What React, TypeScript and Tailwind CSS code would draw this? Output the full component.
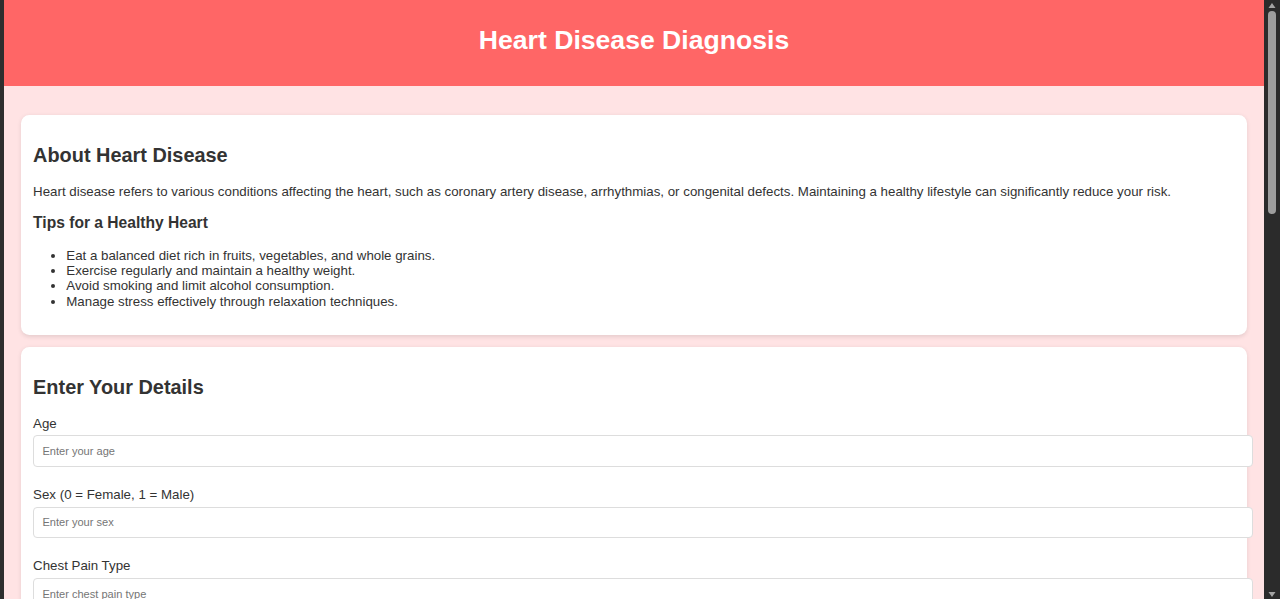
import React from "react";

const tips = [
  "Eat a balanced diet rich in fruits, vegetables, and whole grains.",
  "Exercise regularly and maintain a healthy weight.",
  "Avoid smoking and limit alcohol consumption.",
  "Manage stress effectively through relaxation techniques.",
];

const fields = [
  { label: "Age", placeholder: "Enter your age" },
  { label: "Sex (0 = Female, 1 = Male)", placeholder: "Enter your sex" },
  { label: "Chest Pain Type", placeholder: "Enter chest pain type" },
  { label: "Resting Blood Pressure", placeholder: "Enter resting blood pressure" },
  { label: "Cholesterol", placeholder: "Enter cholesterol level" },
];

function Scrollbar() {
  return (
    <div className="w-[16px] shrink-0 bg-[#2b2b2b] flex flex-col items-center">
      <svg width="8" height="10" viewBox="0 0 8 10" className="mt-[1px]">
        <path d="M4 2 L7.5 7 L0.5 7 Z" fill="#a3a3a3" />
      </svg>
      <div className="w-[8px] h-[203px] rounded-[4px] bg-[#9e9e9e]" />
      <div className="flex-1" />
      <svg width="8" height="8" viewBox="0 0 8 8" className="mb-[1px]">
        <path d="M0.5 2 L7.5 2 L4 7 Z" fill="#a3a3a3" />
      </svg>
    </div>
  );
}

export default function App() {
  return (
    <div className="h-[599px] w-[1280px] overflow-hidden flex bg-[#2b2b2b] font-['Liberation_Sans',Arial,sans-serif] text-[#333]">
      <div className="w-[4px] shrink-0 bg-[#2e2e2e]" />

      <div className="flex-1 min-w-0 bg-[#ffe3e4] overflow-hidden">
        <header className="h-[86px] pb-[7px] bg-[#ff6666] flex items-center justify-center">
          <h1 className="text-[26.6px] leading-[30px] font-bold text-white">Heart Disease Diagnosis</h1>
        </header>

        <main className="px-[16.6px] pt-[16.6px]">
          <section className="bg-white rounded-[8.3px] shadow-[0_1.6px_4px_rgba(0,0,0,0.1)] p-[12.5px] mt-[12.5px]">
            <h2 className="mt-[16.5px] mb-[16.5px] text-[19.9px] leading-[22.9px] font-bold">About Heart Disease</h2>
            <p className="text-[13.3px] leading-[15.3px]">
              Heart disease refers to various conditions affecting the heart, such as coronary artery disease,
              arrhythmias, or congenital defects. Maintaining a healthy lifestyle can significantly reduce your risk.
            </p>
            <h3 className="mt-[15.6px] mb-[15.6px] text-[15.6px] leading-[17.9px] font-bold">Tips for a Healthy Heart</h3>
            <ul className="list-disc pl-[33.2px] mb-[13.3px] text-[13.3px] leading-[15.3px]">
              {tips.map((tip) => (
                <li key={tip}>{tip}</li>
              ))}
            </ul>
          </section>

          <section className="bg-white rounded-[8.3px] shadow-[0_1.6px_4px_rgba(0,0,0,0.1)] p-[12.5px] mt-[12.5px]">
            <h2 className="mt-[16.5px] mb-[16.5px] text-[19.9px] leading-[22.9px] font-bold">Enter Your Details</h2>
            <form>
              {fields.map((f) => (
                <div key={f.label} className="mb-[20.4px]">
                  <label className="block mb-[4.3px] text-[13.3px] leading-[15.3px]">{f.label}</label>
                  <input
                    type="text"
                    placeholder={f.placeholder}
                    className="block box-content w-[calc(100%-1px)] h-[12.7px] px-[8.3px] py-[8.3px] border border-[#ddd] rounded-[4px] bg-white text-[11.07px] leading-[12.7px] placeholder:text-[#757575] outline-none"
                  />
                </div>
              ))}
            </form>
          </section>
        </main>
      </div>

      <Scrollbar />
    </div>
  );
}
